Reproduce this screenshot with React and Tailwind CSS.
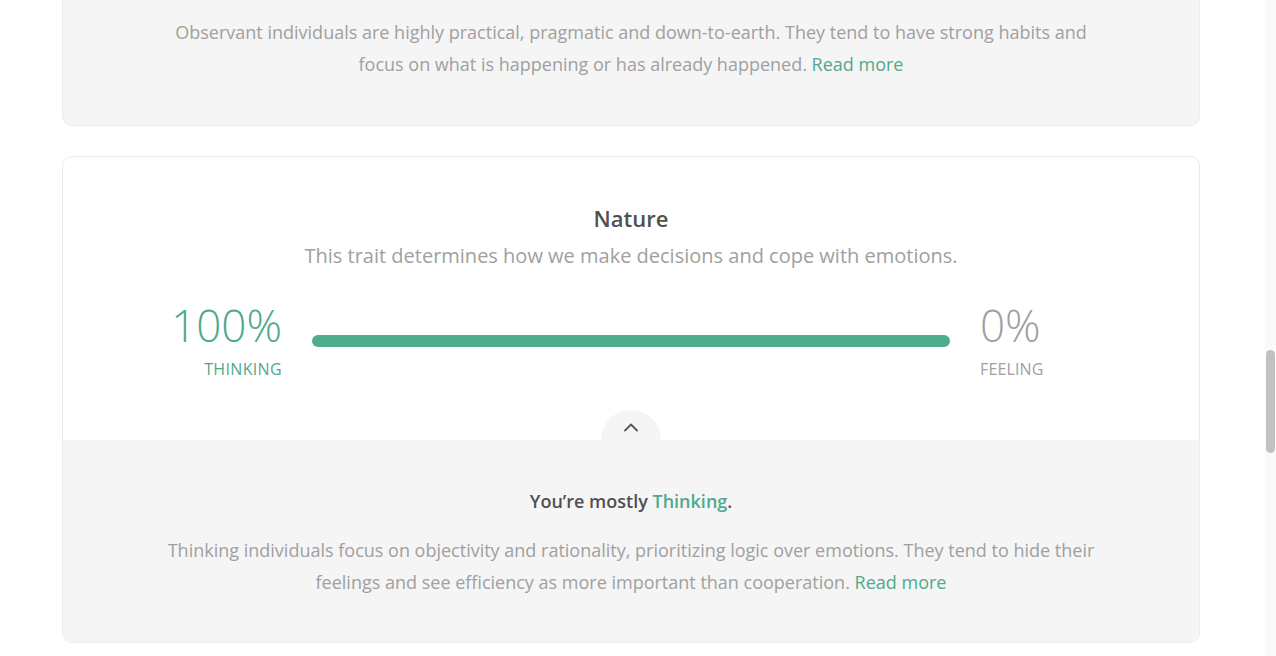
import React from "react";

const font = { fontFamily: '"Open Sans", "Noto Sans", sans-serif' };

function ChevronUp() {
  return (
    <svg width="16" height="10" viewBox="0 0 16 10" fill="none">
      <path d="M2 8.5 L8 2.5 L14 8.5" stroke="#555" strokeWidth="1.8" strokeLinecap="round" strokeLinejoin="round" />
    </svg>
  );
}

export default function App() {
  return (
    <div className="flex w-[1276px] h-[656px] overflow-hidden bg-white" style={font}>
      <div className="flex-1 pl-[62px]">
        {/* top card (cut off) */}
        <div className="w-[1138px] bg-[#f5f5f5] border border-t-0 border-[#ebebeb] rounded-b-[10px] pt-[16px] pb-[45px]">
          <p className="mx-auto max-w-[940px] text-center text-[18px] leading-[32px] text-[#a0a0a0]">
            Observant individuals are highly practical, pragmatic and down-to-earth. They tend to have strong habits and focus on what is happening or has already happened.{" "}
            <span className="text-[#4fa98b]">Read more</span>
          </p>
        </div>

        {/* nature card */}
        <div className="mt-[30px] w-[1138px] border border-[#ebebeb] rounded-[10px] bg-white">
          <div className="flex flex-col items-center pt-[47px] pb-[59px]">
            <h3 className="text-[22px] leading-[28px] font-semibold text-[#505050]">Nature</h3>
            <p className="mt-[8px] text-[20px] leading-[32px] text-[#a0a0a0]">
              This trait determines how we make decisions and cope with emotions.
            </p>
            <div className="mt-[27px] flex items-start gap-[30px]">
              <div className="w-[110px] flex flex-col items-end">
                <div className="text-[44px] leading-[52px] font-light text-[#4fa98b]">100%</div>
                <div className="mt-[6px] text-[16px] leading-[24px] tracking-[0.35px] text-[#4fa98b]">THINKING</div>
              </div>
              <div className="w-[638px] mt-[36px] h-[12px] rounded-full bg-[#4fac8c]" />
              <div className="w-[110px] flex flex-col items-start">
                <div className="text-[44px] leading-[52px] font-light text-[#a0a0a0]">0%</div>
                <div className="mt-[6px] text-[16px] leading-[24px] tracking-[0.15px] text-[#a0a0a0]">FEELING</div>
              </div>
            </div>
          </div>
          <div className="relative bg-[#f5f5f5] rounded-b-[10px] pt-[48px] pb-[44px] flex flex-col items-center">
            <div className="absolute left-1/2 -translate-x-1/2 -top-[30px] w-[60px] h-[60px] rounded-full bg-[#f5f5f5] flex justify-center pt-[12px]">
              <ChevronUp />
            </div>
            <h4 className="relative text-[18px] leading-[26px] font-semibold text-[#505050]">
              You’re mostly <span className="text-[#4fa98b]">Thinking</span>.
            </h4>
            <p className="mt-[20px] max-w-[940px] text-center text-[18px] leading-[32px] text-[#a0a0a0]">
              Thinking individuals focus on objectivity and rationality, prioritizing logic over emotions. They tend to hide their feelings and see efficiency as more important than cooperation.{" "}
              <span className="text-[#4fa98b]">Read more</span>
            </p>
          </div>
        </div>
      </div>
      <div className="w-[11px] bg-[#fafafa] pt-[350px]">
        <div className="ml-[1px] w-[9px] h-[103px] rounded-full bg-[#c1c1c1]" />
      </div>
    </div>
  );
}
